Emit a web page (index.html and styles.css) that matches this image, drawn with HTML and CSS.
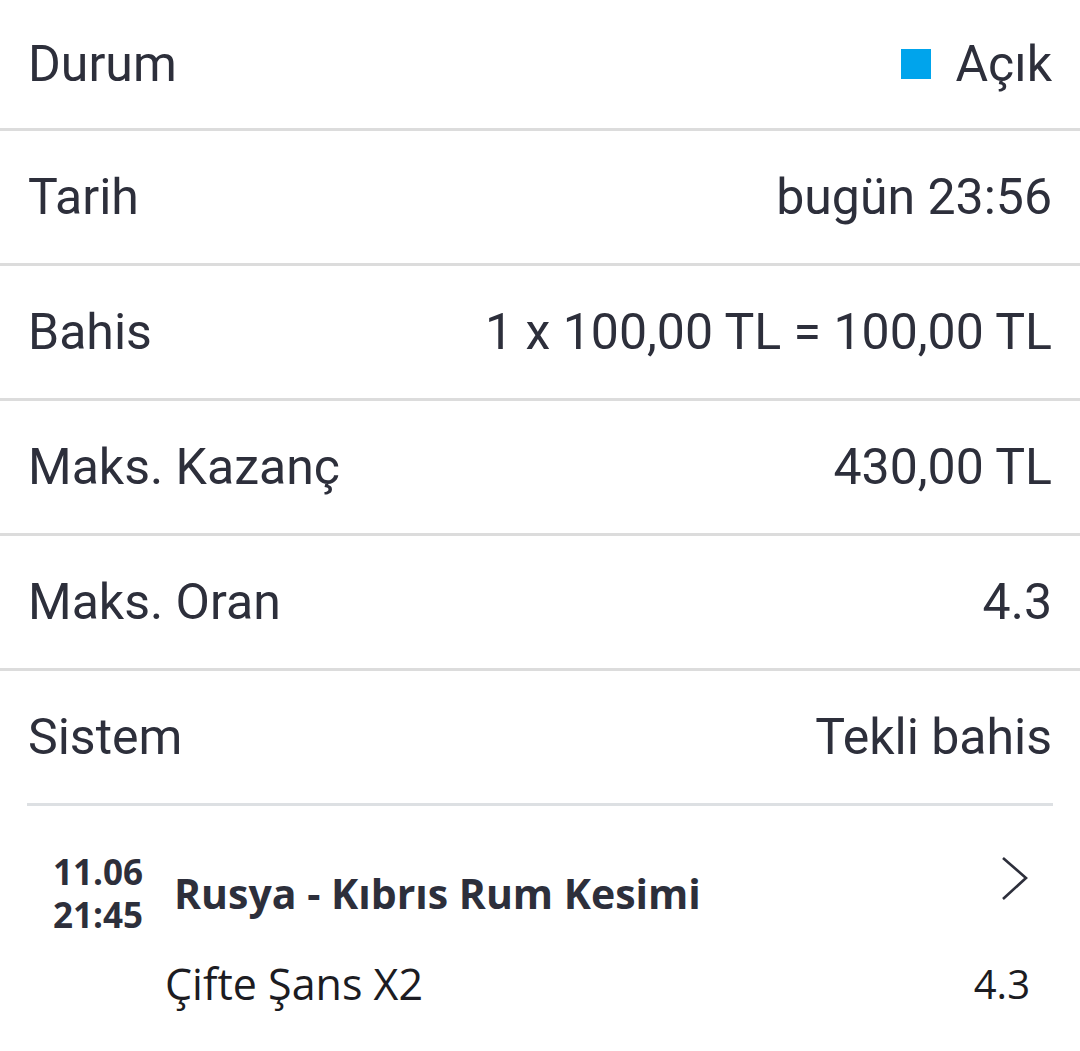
FILE: index.html
```html
<!DOCTYPE html>
<html lang="tr">
<head>
    <meta charset="UTF-8">
    <meta name="viewport" content="width=device-width, initial-scale=1.0">
    <title>Kupon Detayı</title>
    <link rel="stylesheet" href="styles.css">
</head>
<body>
    <div class="summary">
        <div class="row first">
            <span class="label">Durum</span>
            <span class="value status"><i class="status-dot"></i>Açık</span>
        </div>
        <div class="row">
            <span class="label">Tarih</span>
            <span class="value">bugün 23:56</span>
        </div>
        <div class="row">
            <span class="label">Bahis</span>
            <span class="value">1 x 100,00 TL = 100,00 TL</span>
        </div>
        <div class="row">
            <span class="label">Maks. Kazanç</span>
            <span class="value">430,00 TL</span>
        </div>
        <div class="row">
            <span class="label">Maks. Oran</span>
            <span class="value">4.3</span>
        </div>
        <div class="row last">
            <span class="label">Sistem</span>
            <span class="value">Tekli bahis</span>
        </div>
    </div>

    <div class="event">
        <div class="event-head">
            <div class="event-time">11.06<br>21:45</div>
            <div class="event-name">Rusya - Kıbrıs Rum Kesimi</div>
            <svg class="chevron" width="30" height="46" viewBox="0 0 30 46">
                <polyline points="3,2 26,22 3,43" fill="none" stroke="#2d2f3b" stroke-width="2.6"/>
            </svg>
        </div>
        <div class="pick">
            <span class="pick-name">Çifte Şans X2</span>
            <span class="pick-odd">4.3</span>
        </div>
    </div>
</body>
</html>
```

FILE: styles.css
```css
body {
    margin: 0;
    padding: 0;
    background: #ffffff;
    color: #2d2f3b;
    font-family: Roboto, Arial, sans-serif;
    width: 1080px;
}
.row {
    display: flex;
    justify-content: space-between;
    align-items: center;
    height: 132px;
    padding: 0 28px 0 28px;
    border-bottom: 3px solid #dcdcdc;
    font-size: 50px;
}
.row.first {
    height: 128px;
}
.row.last {
    border-bottom: none;
}
.status {
    display: flex;
    align-items: center;
}
.status-dot {
    display: inline-block;
    width: 30px;
    height: 30px;
    background: #00a4ec;
    margin-right: 24px;
}

.event {
    margin: 0 27px;
    border-top: 3px solid #dde0e3;
    padding: 44px 23px 0 22px;
    font-family: "Open Sans", sans-serif;
}
.event-head {
    display: flex;
    align-items: center;
}
.event-time {
    font-size: 35px;
    font-weight: 700;
    line-height: 43px;
    width: 94px;
    text-align: right;
}
.event-name {
    flex: 1;
    margin-left: 31px;
    font-size: 41px;
    font-weight: 700;
}
.chevron {
    align-self: flex-start;
    margin-top: 6px;
}
.pick {
    display: flex;
    justify-content: space-between;
    align-items: center;
    margin-top: 20px;
    padding-left: 116px;
    font-size: 43px;
    line-height: 56px;
    color: #1c1c22;
}
.pick-odd {
    font-size: 40px;
}
```
